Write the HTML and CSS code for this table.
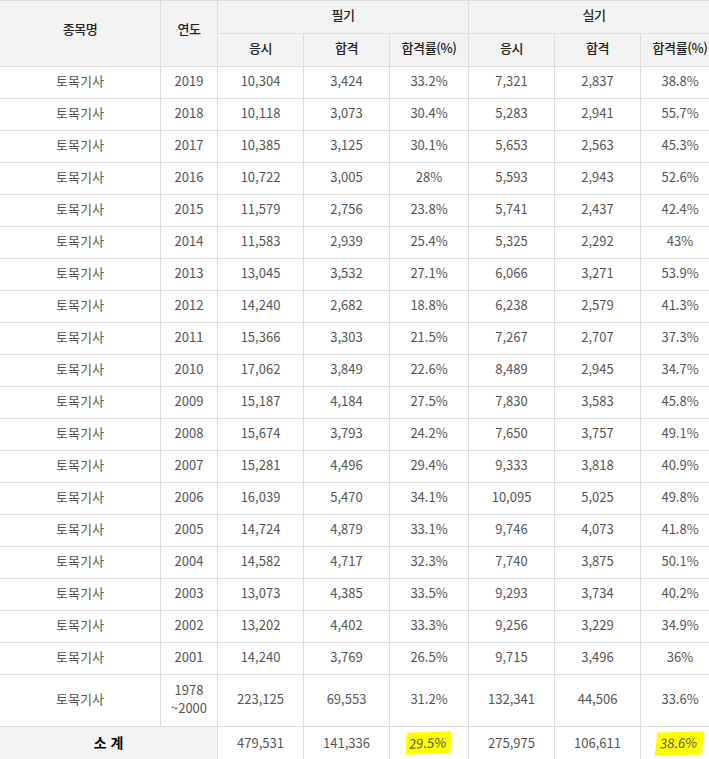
FILE: index.html
```html
<!DOCTYPE html>
<html lang="ko">
<head>
<meta charset="utf-8">
<link rel="stylesheet" href="styles.css">
</head>
<body>
<table class="stat">
  <colgroup>
    <col class="c-name"><col class="c-year">
    <col class="c-num"><col class="c-num"><col class="c-rate">
    <col class="c-num"><col class="c-num"><col class="c-rate">
  </colgroup>
  <thead>
    <tr class="h1">
      <th rowspan="2" class="span2">종목명</th>
      <th rowspan="2" class="span2">연도</th>
      <th colspan="3">필기</th>
      <th colspan="3">실기</th>
    </tr>
    <tr class="h2">
      <th>응시</th><th>합격</th><th>합격률(%)</th>
      <th>응시</th><th>합격</th><th>합격률(%)</th>
    </tr>
  </thead>
  <tbody>
    <tr><td>토목기사</td><td>2019</td><td>10,304</td><td>3,424</td><td>33.2%</td><td>7,321</td><td>2,837</td><td>38.8%</td></tr>
    <tr><td>토목기사</td><td>2018</td><td>10,118</td><td>3,073</td><td>30.4%</td><td>5,283</td><td>2,941</td><td>55.7%</td></tr>
    <tr><td>토목기사</td><td>2017</td><td>10,385</td><td>3,125</td><td>30.1%</td><td>5,653</td><td>2,563</td><td>45.3%</td></tr>
    <tr><td>토목기사</td><td>2016</td><td>10,722</td><td>3,005</td><td>28%</td><td>5,593</td><td>2,943</td><td>52.6%</td></tr>
    <tr><td>토목기사</td><td>2015</td><td>11,579</td><td>2,756</td><td>23.8%</td><td>5,741</td><td>2,437</td><td>42.4%</td></tr>
    <tr><td>토목기사</td><td>2014</td><td>11,583</td><td>2,939</td><td>25.4%</td><td>5,325</td><td>2,292</td><td>43%</td></tr>
    <tr><td>토목기사</td><td>2013</td><td>13,045</td><td>3,532</td><td>27.1%</td><td>6,066</td><td>3,271</td><td>53.9%</td></tr>
    <tr><td>토목기사</td><td>2012</td><td>14,240</td><td>2,682</td><td>18.8%</td><td>6,238</td><td>2,579</td><td>41.3%</td></tr>
    <tr><td>토목기사</td><td>2011</td><td>15,366</td><td>3,303</td><td>21.5%</td><td>7,267</td><td>2,707</td><td>37.3%</td></tr>
    <tr><td>토목기사</td><td>2010</td><td>17,062</td><td>3,849</td><td>22.6%</td><td>8,489</td><td>2,945</td><td>34.7%</td></tr>
    <tr><td>토목기사</td><td>2009</td><td>15,187</td><td>4,184</td><td>27.5%</td><td>7,830</td><td>3,583</td><td>45.8%</td></tr>
    <tr><td>토목기사</td><td>2008</td><td>15,674</td><td>3,793</td><td>24.2%</td><td>7,650</td><td>3,757</td><td>49.1%</td></tr>
    <tr><td>토목기사</td><td>2007</td><td>15,281</td><td>4,496</td><td>29.4%</td><td>9,333</td><td>3,818</td><td>40.9%</td></tr>
    <tr><td>토목기사</td><td>2006</td><td>16,039</td><td>5,470</td><td>34.1%</td><td>10,095</td><td>5,025</td><td>49.8%</td></tr>
    <tr><td>토목기사</td><td>2005</td><td>14,724</td><td>4,879</td><td>33.1%</td><td>9,746</td><td>4,073</td><td>41.8%</td></tr>
    <tr><td>토목기사</td><td>2004</td><td>14,582</td><td>4,717</td><td>32.3%</td><td>7,740</td><td>3,875</td><td>50.1%</td></tr>
    <tr><td>토목기사</td><td>2003</td><td>13,073</td><td>4,385</td><td>33.5%</td><td>9,293</td><td>3,734</td><td>40.2%</td></tr>
    <tr><td>토목기사</td><td>2002</td><td>13,202</td><td>4,402</td><td>33.3%</td><td>9,256</td><td>3,229</td><td>34.9%</td></tr>
    <tr><td>토목기사</td><td>2001</td><td>14,240</td><td>3,769</td><td>26.5%</td><td>9,715</td><td>3,496</td><td>36%</td></tr>
    <tr class="tall"><td>토목기사</td><td class="range">1978<br>~2000</td><td>223,125</td><td>69,553</td><td>31.2%</td><td>132,341</td><td>44,506</td><td>33.6%</td></tr>
    <tr class="total">
      <th colspan="2">소 계</th>
      <td>479,531</td><td>141,336</td><td><span class="hl">29.5%</span></td>
      <td>275,975</td><td>106,611</td><td><span class="hl hl2">38.6%</span></td>
    </tr>
  </tbody>
</table>
</body>
</html>
```

FILE: styles.css
```css
html, body {
  margin: 0;
  padding: 0;
  background: #fff;
  overflow: hidden;
}
.stat {
  border-collapse: collapse;
  table-layout: fixed;
  width: 720px;
  margin-left: -1px;
  font-family: "Malgun Gothic", "Noto Sans CJK KR", "Noto Sans", sans-serif;
  font-size: 13px;
  color: #555;
}
.c-name { width: 161px; }
.c-year { width: 57px; }
.c-num { width: 86px; }
.c-rate { width: 79px; }
.stat th, .stat td {
  border: 1px solid #dedede;
  text-align: center;
  vertical-align: middle;
  padding: 0 0 4px 0;
  line-height: 18px;
}
.stat th {
  background: #f3f3f3;
  color: #222;
  font-size: 13px;
  font-weight: 500;
  letter-spacing: -0.4px;
}
.stat td {
  height: 27px;
}
.h1 th, .h2 th {
  height: 28px;
}
.stat th.span2 {
  padding-bottom: 10px;
}
.tall td {
  height: 47px;
}
.range {
  line-height: 21px;
}
.total th {
  color: #000;
  font-weight: 700;
  font-size: 14px;
  letter-spacing: 0;
  height: 30px;
  padding-bottom: 2px;
  padding-top: 0;
}
.total td {
  height: 32px;
  padding: 0;
}
.hl {
  display: inline-block;
  background: #ffff00;
  padding: 2px 5px 2px 3px;
  transform: rotate(-2deg) skewX(-6deg);
}
.hl2 {
  padding: 2px 6px 3px 4px;
  transform: rotate(-1.5deg) skewX(-8deg);
}
```
